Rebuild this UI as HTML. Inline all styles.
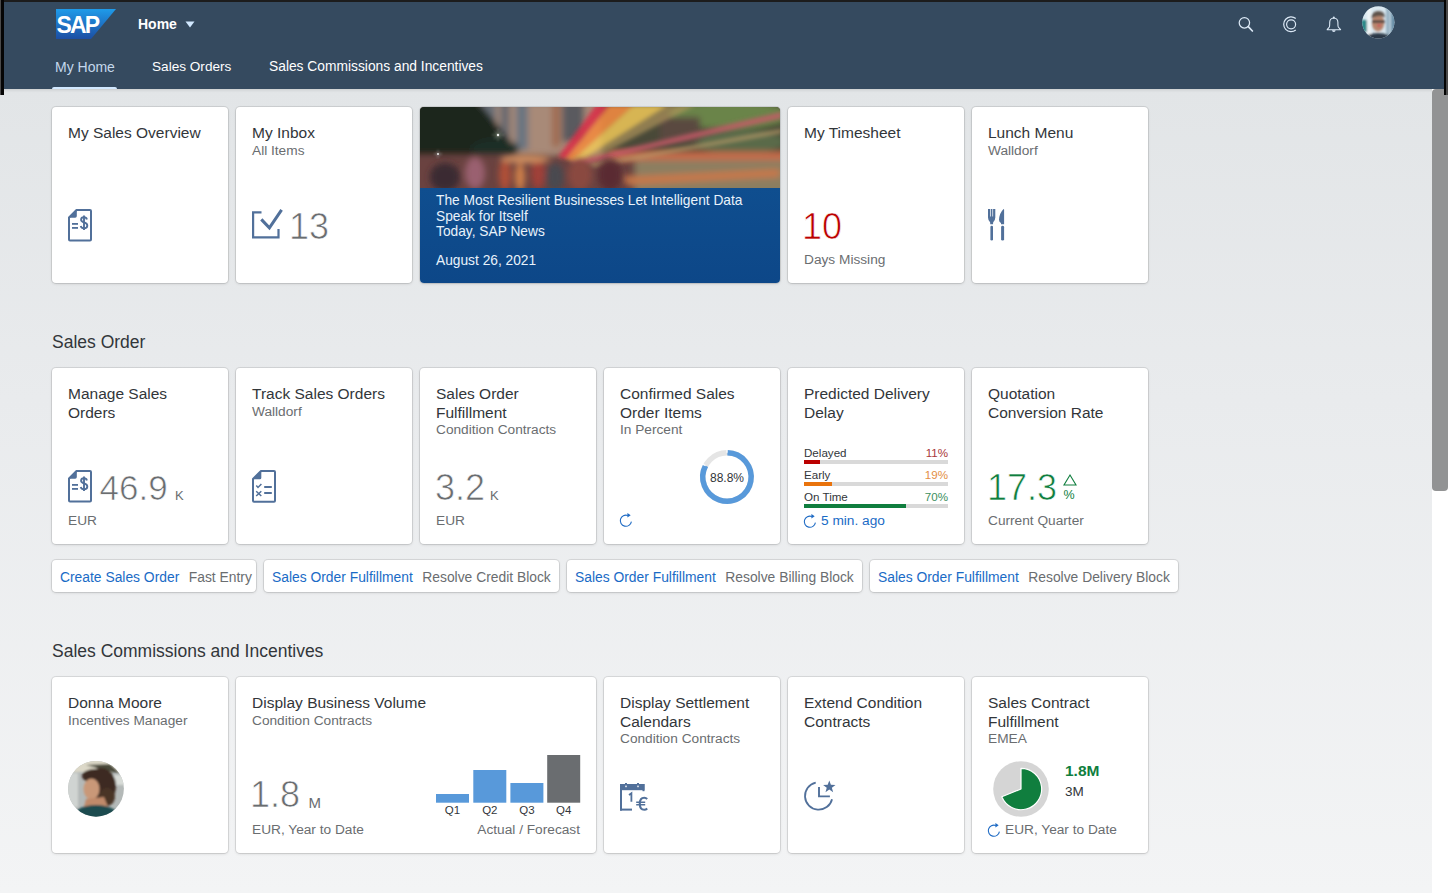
<!DOCTYPE html>
<html><head><meta charset="utf-8"><style>
*{box-sizing:border-box;margin:0;padding:0}
html,body{width:1448px;height:893px;overflow:hidden}
body{font-family:"Liberation Sans",sans-serif;position:relative;background:linear-gradient(to bottom,#e2e5e7 89px,#e9ebed 400px,#f3f4f5 893px);color:#32363a}
.abs{position:absolute;white-space:nowrap}
svg.abs{overflow:visible}
#hdr{position:absolute;left:0;top:0;width:1448px;height:89px;background:#354a5f;box-shadow:0 1px 3px rgba(0,0,0,0.12)}
.card{position:absolute;width:176px;height:176px;background:#fff;border-radius:4px;box-shadow:0 0 0 1px rgba(0,0,0,0.09),0 1px 3px rgba(0,0,0,0.12)}
.tt{position:absolute;left:16px;top:17px;width:144px;font-size:15.5px;line-height:18.5px;color:#32363a;white-space:normal}
.st{font-size:13.7px;line-height:16.5px;color:#6a6d70;display:block}
.unit{position:absolute;left:16px;top:144px;font-size:13.7px;line-height:17px;color:#6a6d70;white-space:nowrap}
.num{position:absolute;top:102.5px;font-size:36px;line-height:34px;color:#6a6d70;white-space:nowrap;-webkit-text-stroke:0.7px #fff}
.sc{position:absolute;font-size:13px;line-height:13px;color:#6a6d70;white-space:nowrap}
.link{position:absolute;top:560px;height:32px;background:#fff;border-radius:4px;box-shadow:0 0 0 1px rgba(0,0,0,0.09),0 1px 3px rgba(0,0,0,0.12);font-size:13.85px;line-height:30.5px;white-space:nowrap;padding-left:8px;padding-top:1.5px}
.link b{font-weight:normal;color:#1a6bc6}
.link i{font-style:normal;color:#6a6d70;margin-left:9.5px}
.sect{position:absolute;left:52px;font-size:17.5px;line-height:20px;color:#32363a;white-space:nowrap}
.lbl{position:absolute;left:16px;font-size:11.6px;line-height:13px;color:#32363a;white-space:nowrap}
.pct{position:absolute;right:16px;font-size:11.6px;line-height:13px;white-space:nowrap}
.trk{position:absolute;left:16px;width:144px;height:4px;background:#d9d9d9}
.trk div{height:4px}
</style></head><body>

<div id="hdr">
  <svg class="abs" style="left:56px;top:9px" width="60" height="30" viewBox="0 0 60 30">
    <defs><linearGradient id="sapg" x1="0" y1="0" x2="0" y2="1"><stop offset="0" stop-color="#1f9be9"/><stop offset="1" stop-color="#1c4ea3"/></linearGradient></defs>
    <polygon points="0,0 60,0 35,30 0,30" fill="url(#sapg)"/>
    <text x="0.5" y="24" font-family="Liberation Sans" font-weight="bold" font-size="23" fill="#fff" letter-spacing="-1.8">SAP</text>
  </svg>
  <div class="abs" style="left:138px;top:16px;font-size:14px;line-height:16px;font-weight:bold;color:#fff">Home</div>
  <svg class="abs" style="left:185px;top:21px" width="10" height="7" viewBox="0 0 10 7"><polygon points="0.5,0.5 9.5,0.5 5,6.5" fill="#d1e8ff"/></svg>
  <div class="abs" style="left:55px;top:59.3px;font-size:14px;line-height:16px;color:#c4d8ec">My Home</div>
  <div class="abs" style="left:152px;top:59.3px;font-size:13.6px;line-height:16px;color:#fff">Sales Orders</div>
  <div class="abs" style="left:269px;top:59.3px;font-size:13.8px;line-height:16px;color:#fff">Sales Commissions and Incentives</div>
  <div class="abs" style="left:52px;top:86.5px;width:65px;height:2.5px;background:#d1e8ff;border-radius:2px 2px 0 0"></div>
  <svg class="abs" style="left:1236px;top:14px" width="20" height="20" viewBox="0 0 20 20"><circle cx="8.4" cy="8.8" r="5.2" fill="none" stroke="#dce9f6" stroke-width="1.25"/><line x1="12.3" y1="12.7" x2="16.4" y2="17" stroke="#dce9f6" stroke-width="1.7" stroke-linecap="round"/></svg>
  <svg class="abs" style="left:1280px;top:14px" width="20" height="20" viewBox="0 0 20 20"><path d="M15.76,4.55 A7.4,7.4 0 1 0 15.76,16.05" fill="none" stroke="#dce9f6" stroke-width="1.2"/><circle cx="11.1" cy="10.3" r="4.5" fill="none" stroke="#dce9f6" stroke-width="1.2"/></svg>
  <svg class="abs" style="left:1324px;top:14px" width="20" height="20" viewBox="0 0 20 20"><path d="M3.2,15.7 L5.3,13 Q5.7,12 5.7,10 L5.7,8.5 Q5.7,4.2 9.8,4 Q13.9,4.2 13.9,8.5 L13.9,10 Q13.9,12 14.3,13 L16.6,15.7 Z" fill="none" stroke="#dce9f6" stroke-width="1.1" stroke-linejoin="round"/><circle cx="9.8" cy="3.4" r="1" fill="#dce9f6"/><path d="M8,16.2 A1.8,1.8 0 0 0 11.6,16.2Z" fill="#dce9f6"/></svg>
  <svg class="abs" style="left:1362px;top:6px" width="33" height="33" viewBox="0 0 33 33">
    <defs><clipPath id="avc"><circle cx="16.3" cy="16.3" r="16.1"/></clipPath>
    <filter id="bl1" x="-30%" y="-30%" width="160%" height="160%"><feGaussianBlur stdDeviation="0.9"/></filter></defs>
    <g clip-path="url(#avc)">
      <rect width="33" height="33" fill="#dae8f0"/>
      <g filter="url(#bl1)">
      <rect x="-2" y="14" width="7" height="12" fill="#2f8a8a"/>
      <rect x="24" y="0" width="4" height="33" fill="#9ab4c4"/>
      <rect x="29" y="4" width="5" height="26" fill="#6a90a8"/>
      <rect x="5" y="0" width="4" height="33" fill="#f0f4f6"/>
      <ellipse cx="16" cy="17" rx="6.3" ry="8.5" fill="#b8866e"/>
      <ellipse cx="17" cy="19.5" rx="2" ry="1.6" fill="#c85a5a"/>
      <path d="M9,13 Q9.5,5 16.5,5 Q23,5 23,12 L22,11 Q17,8.5 10,12Z" fill="#5e534c"/>
      <rect x="10" y="14.5" width="13" height="2.2" fill="#3a3434"/>
      <path d="M1,34 Q4,27 16,27 Q28,27 31,34Z" fill="#293846"/>
      </g>
    </g>
  </svg>
</div>

<div class="card" style="left:52px;top:107px;width:176px"><div class="tt">My Sales Overview</div><svg class="abs" style="left:16px;top:102px" width="24" height="32" viewBox="0 0 24 32">
<path d="M1,8.5 L8.5,1 H22 Q23,1 23,2 V30.4 Q23,31.4 22,31.4 H2 Q1,31.4 1,30.4 Z" fill="none" stroke="#51709a" stroke-width="2" stroke-linejoin="round"/>
<path d="M0.3,8.7 L8.8,0.3 V7 Q8.8,8.7 7.2,8.7 Z" fill="#51709a"/>
<rect x="4" y="14" width="6" height="1.8" fill="#51709a"/><rect x="4" y="18" width="6" height="1.8" fill="#51709a"/>
<path d="M18.9,10.4 C18.5,9 17.5,8.3 16,8.3 C14.2,8.3 13.1,9.2 13.1,10.7 C13.1,12.4 14.6,12.9 16.2,13.4 C17.9,13.9 19.3,14.6 19.3,16.5 C19.3,18.2 18,19.3 16,19.3 C14.3,19.3 13.1,18.5 12.7,17.1" fill="none" stroke="#51709a" stroke-width="1.9"/>
<path d="M16,6.6 V21" stroke="#51709a" stroke-width="1.9"/>
</svg></div>
<div class="card" style="left:236px;top:107px;width:176px"><div class="tt">My Inbox<span class="st">All Items</span></div><svg class="abs" style="left:16px;top:102px" width="31" height="31" viewBox="0 0 31 31">
<path d="M9.5,3.3 H1.1 V28.4 H26.5 V20" fill="none" stroke="#51709a" stroke-width="2.2"/>
<path d="M9.3,10.4 L17.4,18.9 L29.6,0.8" fill="none" stroke="#51709a" stroke-width="3"/>
</svg><div class="num" style="left:53px">13</div></div>
<div class="card" style="left:420px;top:107px;width:360px;overflow:hidden"><svg class="abs" style="left:0;top:0" width="360" height="81" viewBox="0 0 360 81">
<defs>
<filter id="nb" x="-20%" y="-20%" width="140%" height="140%"><feGaussianBlur stdDeviation="3"/></filter>
<filter id="nb2" x="-20%" y="-20%" width="140%" height="140%"><feGaussianBlur stdDeviation="2.2"/></filter>
<filter id="nb3" x="-20%" y="-20%" width="140%" height="140%"><feGaussianBlur stdDeviation="0.8"/></filter>
<linearGradient id="trl" x1="0" y1="1" x2="1" y2="0"><stop offset="0" stop-color="#f0a040"/><stop offset="0.5" stop-color="#f0c860"/><stop offset="1" stop-color="#d8c870"/></linearGradient>
</defs>
<rect width="360" height="81" fill="#4a3a36"/>
<g filter="url(#nb)">
<rect x="45" y="-5" width="140" height="55" fill="#a88a78"/>
<rect x="62" y="-5" width="14" height="52" fill="#6a7078"/>
<rect x="80" y="-5" width="10" height="50" fill="#6a6a70"/>
<rect x="96" y="-5" width="12" height="48" fill="#6a7480"/>
<rect x="132" y="-5" width="8" height="45" fill="#a06a50"/>
<rect x="142" y="-5" width="22" height="40" fill="#5a5a5e"/>
<path d="M-10,-10 L55,-10 Q80,20 98,45 L60,52 L-10,55Z" fill="#1a261e"/>
<ellipse cx="75" cy="42" rx="24" ry="10" fill="#1e2e26"/>
<rect x="180" y="-5" width="190" height="55" fill="#4a4a38"/>
<ellipse cx="310" cy="8" rx="60" ry="14" fill="#6a8448"/>
<ellipse cx="320" cy="35" rx="45" ry="12" fill="#5a6a48"/>
<rect x="240" y="10" width="40" height="25" fill="#5a4a40"/>
<rect x="-10" y="48" width="230" height="40" fill="#6a4240"/>
<rect x="215" y="52" width="155" height="35" fill="#8c7e60"/>
<rect x="190" y="45" width="180" height="8" fill="#c86a48"/>
<path d="M200,70 L360,62 L360,70 L210,78Z" fill="#c8784a"/>
</g>
<g filter="url(#nb2)">
<path d="M138,50 L176,-2 L190,-2 L146,52Z" fill="#d83048" opacity="0.9"/>
<path d="M146,52 L190,-2 L214,-2 L152,54Z" fill="#f08a40" opacity="0.9"/>
<path d="M152,54 L214,-2 L248,-2 L158,55Z" fill="#f0c858" opacity="0.85"/>
<path d="M158,55 L248,-2 L276,-2 L165,56Z" fill="#c0a060" opacity="0.6"/>
<path d="M150,55 L362,5 L362,11 L160,58Z" fill="#c85a68" opacity="0.85"/>
<path d="M165,58 L362,22 L362,26 L175,60Z" fill="#b89868" opacity="0.8"/>
</g>
<g filter="url(#nb)">
<ellipse cx="25" cy="70" rx="15" ry="14" fill="#3a2a30"/>
<ellipse cx="55" cy="66" rx="10" ry="16" fill="#9a6070"/>
<ellipse cx="85" cy="68" rx="6" ry="16" fill="#b05038"/>
<ellipse cx="100" cy="70" rx="5" ry="14" fill="#d08048"/>
<ellipse cx="118" cy="66" rx="7" ry="16" fill="#a04038"/>
<ellipse cx="135" cy="70" rx="9" ry="14" fill="#4a4a50"/>
<ellipse cx="160" cy="68" rx="12" ry="16" fill="#8a4a40"/>
<ellipse cx="190" cy="68" rx="12" ry="16" fill="#5a2a30"/>
<ellipse cx="105" cy="52" rx="25" ry="4" fill="#d09060"/>
</g>
<g filter="url(#nb3)" opacity="0.6">
<path d="M78,22 L78,34 M72,28 L84,28 M74,24 L82,32 M82,24 L74,32" stroke="#e8f0d8" stroke-width="0.7"/>
<path d="M18,43 L18,51 M14,47 L22,47" stroke="#e8f0f8" stroke-width="0.7"/>
</g>
<circle cx="78" cy="28" r="1.2" fill="#fff" opacity="0.9"/>
<circle cx="18" cy="47" r="1" fill="#fff" opacity="0.9"/>
</svg><div class="abs" style="left:0;top:81px;width:360px;height:95px;background:linear-gradient(to bottom,#0f4e8f,#0d4788)"></div>
<div class="abs" style="left:16px;top:86px;width:340px;white-space:normal;font-size:13.75px;line-height:15.5px;color:#e8f2fb">The Most Resilient Businesses Let Intelligent Data Speak for Itself<br>Today, SAP News</div>
<div class="abs" style="left:16px;top:145.6px;font-size:13.75px;line-height:16px;color:#e8f2fb">August 26, 2021</div></div>
<div class="card" style="left:788px;top:107px;width:176px"><div class="tt">My Timesheet</div><div class="num" style="left:14px;color:#bb0000">10</div><div class="unit">Days Missing</div></div>
<div class="card" style="left:972px;top:107px;width:176px"><div class="tt">Lunch Menu<span class="st">Walldorf</span></div><svg class="abs" style="left:16px;top:102px" width="17" height="32" viewBox="0 0 17 32">
<path d="M0,0 H2.2 V7.5 H2.9 V0 H4.4 V7.5 H5.1 V0 H7.3 V8.6 Q7.3,11.4 5.2,13.2 L5,15.3 H2.3 L2.1,13.2 Q0,11.4 0,8.6 Z" fill="#51709a"/>
<rect x="2.4" y="16.8" width="2.6" height="14.8" rx="1.3" fill="#51709a"/>
<path d="M15.6,0 Q16.1,0 16.1,0.8 V15.3 H13 V14 Q11,13 11,10.8 Q11.4,4 15.6,0 Z" fill="#51709a"/>
<rect x="13.1" y="16.8" width="3" height="14.8" rx="1.4" fill="#51709a"/>
</svg></div>

<div class="sect" style="top:332px">Sales Order</div>
<div class="card" style="left:52px;top:368px;width:176px"><div class="tt">Manage Sales Orders</div><svg class="abs" style="left:16px;top:102px" width="24" height="32" viewBox="0 0 24 32">
<path d="M1,8.5 L8.5,1 H22 Q23,1 23,2 V30.4 Q23,31.4 22,31.4 H2 Q1,31.4 1,30.4 Z" fill="none" stroke="#51709a" stroke-width="2" stroke-linejoin="round"/>
<path d="M0.3,8.7 L8.8,0.3 V7 Q8.8,8.7 7.2,8.7 Z" fill="#51709a"/>
<rect x="4" y="14" width="6" height="1.8" fill="#51709a"/><rect x="4" y="18" width="6" height="1.8" fill="#51709a"/>
<path d="M18.9,10.4 C18.5,9 17.5,8.3 16,8.3 C14.2,8.3 13.1,9.2 13.1,10.7 C13.1,12.4 14.6,12.9 16.2,13.4 C17.9,13.9 19.3,14.6 19.3,16.5 C19.3,18.2 18,19.3 16,19.3 C14.3,19.3 13.1,18.5 12.7,17.1" fill="none" stroke="#51709a" stroke-width="1.9"/>
<path d="M16,6.6 V21" stroke="#51709a" stroke-width="1.9"/>
</svg><div class="num" style="left:47.5px;font-size:35px;top:103px">46.9</div><div class="sc" style="left:123px;top:121px">K</div><div class="unit">EUR</div></div>
<div class="card" style="left:236px;top:368px;width:176px"><div class="tt">Track Sales Orders<span class="st">Walldorf</span></div><svg class="abs" style="left:16px;top:102px" width="24" height="32" viewBox="0 0 24 32">
<path d="M1,9 L9,1 H22 Q23,1 23,2 V30.7 Q23,31.7 22,31.7 H2 Q1,31.7 1,30.7 Z" fill="none" stroke="#51709a" stroke-width="2" stroke-linejoin="round"/>
<path d="M0.3,9.3 L9.3,0.3 V7.8 Q9.3,9.3 7.8,9.3 Z" fill="#51709a"/>
<path d="M4.3,15.6 L6,17.5 L9.4,13.9" fill="none" stroke="#51709a" stroke-width="1.5"/>
<rect x="12.2" y="16" width="7.6" height="2" fill="#51709a"/>
<path d="M4.2,21.2 L9.3,26 M9.3,21.2 L4.2,26" stroke="#51709a" stroke-width="1.5"/>
<rect x="12.2" y="22" width="7.6" height="2" fill="#51709a"/>
</svg></div>
<div class="card" style="left:420px;top:368px;width:176px"><div class="tt">Sales Order Fulfillment<span class="st">Condition Contracts</span></div><div class="num" style="left:15px">3.2</div><div class="sc" style="left:70px;top:121px">K</div><div class="unit">EUR</div></div>
<div class="card" style="left:604px;top:368px;width:176px"><div class="tt">Confirmed Sales Order Items<span class="st">In Percent</span></div><svg class="abs" style="left:92px;top:78px" width="62" height="62" viewBox="0 0 62 62">
<circle cx="31" cy="31" r="24.2" fill="none" stroke="#e5e5e5" stroke-width="5.5"/>
<path d="M31.4,6.8 A24.2,24.2 0 1 1 9.6,19.6" fill="none" stroke="#5899da" stroke-width="5.5"/>
<path d="M31,6.8 L31,4 M9.6,19.6 L7,18.4" stroke="#fff" stroke-width="1.2"/>
</svg><div class="abs" style="left:106px;top:104px;font-size:12px;line-height:13px;color:#32363a">88.8%</div><svg class="abs" style="left:16px;top:145px" width="13" height="14" viewBox="0 0 13 14"><path d="M7.82,2.44 A5.6,5.6 0 1 0 11.41,8.67" fill="none" stroke="#1f6bc4" stroke-width="1.1"/><polygon points="7.4,0.1 10.7,2.3 7.4,4.5" fill="#1f6bc4"/></svg></div>
<div class="card" style="left:788px;top:368px;width:176px"><div class="tt">Predicted Delivery Delay</div><div class="lbl" style="top:77.8px">Delayed</div><div class="pct" style="top:77.8px;color:#a9383a">11%</div><div class="trk" style="top:92px"><div style="width:16px;background:#bb0000"></div></div><div class="lbl" style="top:99.8px">Early</div><div class="pct" style="top:99.8px;color:#e38e44">19%</div><div class="trk" style="top:114px"><div style="width:28px;background:#e9730c"></div></div><div class="lbl" style="top:121.8px">On Time</div><div class="pct" style="top:121.8px;color:#3c8f5e">70%</div><div class="trk" style="top:136px"><div style="width:102px;background:#107e3e"></div></div><svg class="abs" style="left:16px;top:145.5px" width="13" height="14" viewBox="0 0 13 14"><path d="M7.82,2.44 A5.6,5.6 0 1 0 11.41,8.67" fill="none" stroke="#1f6bc4" stroke-width="1.1"/><polygon points="7.4,0.1 10.7,2.3 7.4,4.5" fill="#1f6bc4"/></svg><div class="abs" style="left:33px;top:143.5px;font-size:13.7px;line-height:17px;color:#1a6bc6">5 min. ago</div></div>
<div class="card" style="left:972px;top:368px;width:176px"><div class="tt">Quotation Conversion Rate</div><div class="num" style="left:15px;color:#107e3e">17.3</div>
<svg class="abs" style="left:91px;top:106px" width="14" height="12" viewBox="0 0 14 12"><polygon points="7,1 13,11 1,11" fill="none" stroke="#107e3e" stroke-width="1.1"/></svg>
<div class="abs" style="left:91.5px;top:121px;font-size:12.5px;line-height:13px;color:#107e3e">%</div>
<div class="unit">Current Quarter</div></div>

<div class="link" style="left:52px;width:204px"><b>Create Sales Order</b><i>Fast Entry</i></div>
<div class="link" style="left:264px;width:295px"><b>Sales Order Fulfillment</b><i>Resolve Credit Block</i></div>
<div class="link" style="left:567px;width:295px"><b>Sales Order Fulfillment</b><i>Resolve Billing Block</i></div>
<div class="link" style="left:870px;width:308px"><b>Sales Order Fulfillment</b><i>Resolve Delivery Block</i></div>

<div class="sect" style="top:641px">Sales Commissions and Incentives</div>
<div class="card" style="left:52px;top:677px;width:176px"><div class="tt">Donna Moore<span class="st">Incentives Manager</span></div><svg class="abs" style="left:16px;top:84px" width="57" height="57" viewBox="0 0 57 57">
<defs><clipPath id="dc"><circle cx="28" cy="27.8" r="27.9"/></clipPath><filter id="db" x="-20%" y="-20%" width="140%" height="140%"><feGaussianBlur stdDeviation="1.1"/></filter></defs>
<g clip-path="url(#dc)">
<rect width="57" height="57" fill="#b4b9b8"/>
<g filter="url(#db)">
<rect x="-2" y="-2" width="60" height="13" fill="#dcd8c8"/>
<path d="M18,4 L42,3 L52,12 L44,11Z" fill="#4a4a3a"/>
<rect x="-2" y="12" width="12" height="34" fill="#d0d4d2"/>
<rect x="44" y="14" width="14" height="10" fill="#d8dcd8"/>
<ellipse cx="33" cy="25" rx="15" ry="18" fill="#3e2c24"/>
<ellipse cx="39" cy="36" rx="8" ry="9" fill="#4a3428"/>
<ellipse cx="27" cy="15" rx="13" ry="7" fill="#3e2c24"/>
<ellipse cx="23.5" cy="28" rx="8" ry="10.5" fill="#c99878"/>
<path d="M18,38 L36,36 L40,46 L16,46Z" fill="#c08a6a"/>
<path d="M2,58 Q8,44 28,44 Q48,44 54,58Z" fill="#1f4c50"/>
</g>
</g>
</svg></div>
<div class="card" style="left:236px;top:677px;width:360px"><div class="tt" style="width:330px">Display Business Volume<span class="st">Condition Contracts</span></div><div class="num" style="left:14px;top:100.5px">1.8</div><div class="sc" style="left:72.5px;top:118.5px;font-size:15px">M</div><div class="unit">EUR, Year to Date</div><svg class="abs" style="left:200px;top:78px" width="144" height="60" viewBox="0 0 144 60">
<rect x="0" y="39" width="33" height="8.7" fill="#5899da"/>
<rect x="37.3" y="15" width="33" height="32.7" fill="#5899da"/>
<rect x="74.4" y="28" width="33" height="19.7" fill="#5899da"/>
<rect x="111.2" y="0" width="33" height="47.7" fill="#6a6d70"/>
</svg><div class="abs" style="left:196.5px;width:40px;text-align:center;top:127px;font-size:11.5px;line-height:13px;color:#32363a">Q1</div><div class="abs" style="left:233.8px;width:40px;text-align:center;top:127px;font-size:11.5px;line-height:13px;color:#32363a">Q2</div><div class="abs" style="left:270.9px;width:40px;text-align:center;top:127px;font-size:11.5px;line-height:13px;color:#32363a">Q3</div><div class="abs" style="left:307.7px;width:40px;text-align:center;top:127px;font-size:11.5px;line-height:13px;color:#32363a">Q4</div><div class="abs" style="right:16px;top:144px;font-size:13.7px;line-height:17px;color:#6a6d70">Actual / Forecast</div></div>
<div class="card" style="left:604px;top:677px;width:176px"><div class="tt">Display Settlement Calendars<span class="st">Condition Contracts</span></div><svg class="abs" style="left:16px;top:106px" width="28" height="29" viewBox="0 0 28 29">
<rect x="0" y="1" width="24.5" height="6.2" fill="#51709a"/>
<rect x="22.5" y="1" width="2" height="7.2" fill="#51709a"/>
<rect x="0" y="1" width="2" height="26.6" fill="#51709a"/>
<rect x="0" y="25.6" width="12" height="2" fill="#51709a"/>
<rect x="5" y="0" width="2" height="2" fill="#51709a"/><rect x="17" y="0" width="2" height="2" fill="#51709a"/>
<rect x="5.3" y="2.6" width="1.4" height="1.6" fill="#fff"/><rect x="17.3" y="2.6" width="1.4" height="1.6" fill="#fff"/>
<path d="M9,11.9 L11.4,10.2 V18.8" fill="none" stroke="#51709a" stroke-width="1.8"/>
<path d="M27.2,15.9 Q26,14.7 24.2,14.7 Q19.8,14.7 19.8,20.8 Q19.8,26.8 24.2,26.8 Q26,26.8 27.2,25.6" fill="none" stroke="#51709a" stroke-width="2.1"/>
<path d="M16.2,19.3 H25.2 M16.2,21.8 H25.2" stroke="#51709a" stroke-width="1.4"/>
</svg></div>
<div class="card" style="left:788px;top:677px;width:176px"><div class="tt">Extend Condition Contracts</div><svg class="abs" style="left:16px;top:104px" width="32" height="31" viewBox="0 0 32 31">
<path d="M11.74,1.63 A13.7,13.7 0 1 0 28.03,18.17" fill="none" stroke="#51709a" stroke-width="1.8"/>
<path d="M15,6.1 V15.4 H25.9" fill="none" stroke="#51709a" stroke-width="1.9"/>
<polygon points="25.30,-0.60 26.89,3.72 31.48,3.89 27.87,6.73 29.12,11.16 25.30,8.60 21.48,11.16 22.73,6.73 19.12,3.89 23.71,3.72" fill="#51709a"/>
</svg></div>
<div class="card" style="left:972px;top:677px;width:176px"><div class="tt">Sales Contract Fulfillment<span class="st">EMEA</span></div><svg class="abs" style="left:20px;top:83px" width="58" height="58" viewBox="0 0 58 58">
<circle cx="29" cy="29" r="27.8" fill="#d5d5d5"/>
<path d="M29,29 L29,8.3 A20.7,20.7 0 1 1 9.8,36.8 Z" fill="#107e3e" stroke="#fff" stroke-width="1.2" stroke-linejoin="round"/>
</svg>
<div class="abs" style="left:93px;top:86px;font-size:15.5px;line-height:16px;font-weight:bold;color:#107e3e">1.8M</div>
<div class="abs" style="left:93px;top:108px;font-size:13.5px;line-height:14px;color:#32363a">3M</div><svg class="abs" style="left:16px;top:145.5px" width="13" height="14" viewBox="0 0 13 14"><path d="M7.82,2.44 A5.6,5.6 0 1 0 11.41,8.67" fill="none" stroke="#1f6bc4" stroke-width="1.1"/><polygon points="7.4,0.1 10.7,2.3 7.4,4.5" fill="#1f6bc4"/></svg><div class="unit" style="left:33px">EUR, Year to Date</div></div>

<div class="abs" style="left:1432px;top:89px;width:16px;height:804px;background:#fff"></div>
<div class="abs" style="left:1432px;top:89px;width:16px;height:402px;background:#929394;border-radius:4px 4px 4px 4px"></div>
<div class="abs" style="left:0;top:0;width:1448px;height:2px;background:#1c1c1c"></div>
<div class="abs" style="left:0;top:0;width:1px;height:95px;background:#4a4a4a"></div>
<div class="abs" style="left:1px;top:0;width:3px;height:95px;background:#050505"></div>
<div class="abs" style="left:1444px;top:0;width:2px;height:95px;background:#050505"></div>
<div class="abs" style="left:1446px;top:0;width:2px;height:95px;background:#4a4a4a"></div>
</body></html>
